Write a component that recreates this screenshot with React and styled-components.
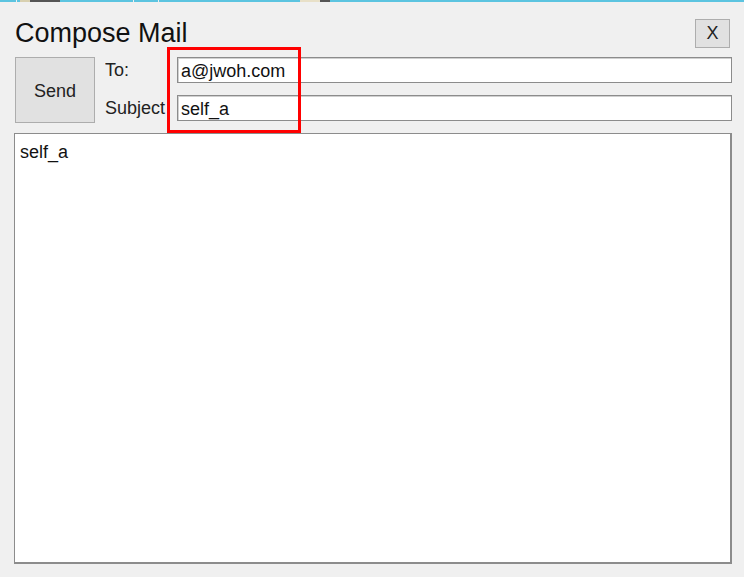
import React from "react";
import styled, { createGlobalStyle } from "styled-components";

const Global = createGlobalStyle`
  html, body { margin: 0; padding: 0; background: #f0f0f0; }
  body { font-family: "Liberation Sans", Arial, sans-serif; color: #000; }
  * { box-sizing: border-box; }
`;

const Window = styled.div`
  width: 744px;
  height: 577px;
  background: #f0f0f0;
  display: flex;
  flex-direction: column;
  overflow: hidden;
`;

const TopStrip = styled.div`
  height: 2px;
  flex: none;
  background: linear-gradient(
    90deg,
    #5cc4e0 0 16px,
    #f0f0f0 16px 17px,
    #5cc4e0 17px 20px,
    #d8d0b0 20px 30px,
    #555 30px 60px,
    #5cc4e0 60px 133px,
    #f0f0f0 133px 134px,
    #5cc4e0 134px 158px,
    #f0f0f0 158px 159px,
    #5cc4e0 159px 300px,
    #e8e0c8 300px 320px,
    #555 320px 330px,
    #5cc4e0 330px 744px
  );
`;

const Header = styled.div`
  display: flex;
  justify-content: space-between;
  align-items: flex-start;
  padding: 16px 14px 0 15px;
`;

const Title = styled.h1`
  margin: 0;
  font-size: 27px;
  font-weight: normal;
  line-height: 31px;
  color: #111;
`;

const CloseButton = styled.button`
  width: 35px;
  height: 29px;
  margin-top: 1px;
  background: #e1e1e1;
  border: 1px solid #adadad;
  font-family: "Liberation Sans", Arial, sans-serif;
  font-size: 18px;
  color: #222;
  padding: 0;
  display: flex;
  align-items: center;
  justify-content: center;
`;

const ComposeRow = styled.div`
  display: flex;
  align-items: flex-start;
  gap: 10px;
  margin: 8px 12px 0 15px;
`;

const SendButton = styled.button`
  width: 80px;
  height: 66px;
  flex: none;
  background: #e1e1e1;
  border: 1px solid #adadad;
  font-family: "Liberation Sans", Arial, sans-serif;
  font-size: 18px;
  color: #222;
  padding: 2px 0 0;
`;

const Fields = styled.div`
  position: relative;
  flex: 1;
  display: flex;
  flex-direction: column;
  gap: 12px;
`;

const FieldRow = styled.div`
  display: flex;
  align-items: center;
  height: 26px;
`;

const Label = styled.span`
  width: 72px;
  flex: none;
  font-size: 18px;
  color: #222;
  white-space: nowrap;
  overflow: hidden;
`;

const TextBox = styled.div`
  flex: 1;
  height: 26px;
  background: #fff;
  border: 1px solid #8c8c8c;
  box-shadow: inset 1px 1px 0 #d0d0d0;
  padding: 1px 3px 0;
  font-size: 18px;
  line-height: 24px;
  color: #111;
`;

const Highlight = styled.div`
  position: absolute;
  left: 62px;
  top: -10px;
  width: 134px;
  height: 86px;
  border: 3px solid #ff0000;
  pointer-events: none;
`;

const Body = styled.div`
  flex: 1;
  margin: 10px 12px 13px 14px;
  background: #fff;
  border: 1px solid #8c8c8c;
  border-right-width: 2px;
  border-bottom-width: 2px;
  padding: 8px 5px;
  font-size: 18px;
  line-height: 21px;
  color: #111;
`;

export default function App() {
  return (
    <>
      <Global />
      <Window>
        <TopStrip />
        <Header>
          <Title>Compose Mail</Title>
          <CloseButton>X</CloseButton>
        </Header>
        <ComposeRow>
          <SendButton>Send</SendButton>
          <Fields>
            <FieldRow>
              <Label>To:</Label>
              <TextBox>a@jwoh.com</TextBox>
            </FieldRow>
            <FieldRow>
              <Label>Subject</Label>
              <TextBox>self_a</TextBox>
            </FieldRow>
            <Highlight />
          </Fields>
        </ComposeRow>
        <Body>self_a</Body>
      </Window>
    </>
  );
}
